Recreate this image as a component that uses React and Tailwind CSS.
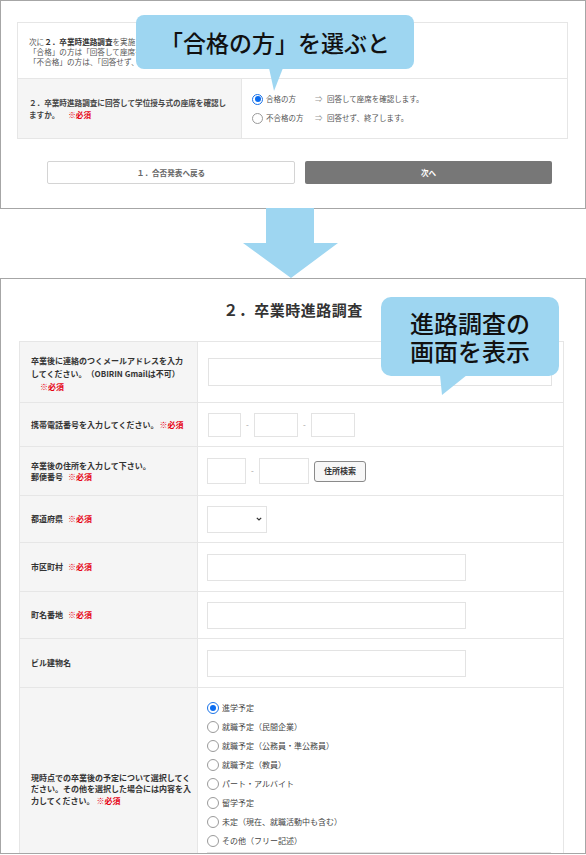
import React from "react";

const Radio = ({ checked, size = "w-[11px] h-[11px]" }) =>
  checked ? (
    <span className={`${size} rounded-full border border-[#1a73e8] bg-white flex items-center justify-center shrink-0`}>
      <span className="w-[6px] h-[6px] rounded-full bg-[#0a6cf0]" />
    </span>
  ) : (
    <span className={`${size} rounded-full border border-[#9a9a9a] bg-white shrink-0`} />
  );

const Req = ({ className = "" }) => (
  <span className={`text-[#e60012] font-bold ${className}`}>※必須</span>
);

const Input = ({ className }) => (
  <div className={`bg-white border border-[#e3e3e3] shrink-0 ${className}`} />
);

const Row = ({ h, label, children, labelClass = "" }) => (
  <div className={`flex border-b border-[#e6e6e6] ${h}`}>
    <div
      className={`w-[178px] shrink-0 bg-[#f5f5f5] border-r border-[#e6e6e6] flex items-center pl-[11px] text-[8px] font-bold text-[#333] whitespace-nowrap ${labelClass}`}
    >
      {label}
    </div>
    <div className="flex-1 flex items-center pl-[9px]">{children}</div>
  </div>
);

const Dash = () => (
  <span className="w-[13px] text-center text-[8px] text-[#999] shrink-0">-</span>
);

export default function App() {
  const plans = [
    "進学予定",
    "就職予定（民間企業）",
    "就職予定（公務員・準公務員）",
    "就職予定（教員）",
    "パート・アルバイト",
    "留学予定",
    "未定（現在、就職活動中も含む）",
    "その他（フリー記述）",
  ];
  return (
    <div className="relative w-[586px] h-[855px] overflow-hidden bg-white font-['Noto_Sans_CJK_JP',sans-serif] text-[#333]">
      {/* Top panel */}
      <div className="h-[209px] border border-[#a6a6a6] bg-white">
        <div className="ml-[16px] mt-[21px] w-[551px] border border-[#e6e6e6]">
          <div className="h-[56px] border-b border-[#e6e6e6] pl-[11px] pt-[14px] text-[7.6px] leading-[10px] text-[#555] whitespace-nowrap">
            <p>
              次に<b className="text-[#333]">２．卒業時進路調査</b>を実施します。
            </p>
            <p>「合格」の方は「回答して座席を確認します。」を、</p>
            <p>「不合格」の方は、「回答せず、終了します。」を選択してください。</p>
          </div>
          <div className="flex h-[59px]">
            <div className="w-[224px] shrink-0 bg-[#f5f5f5] border-r border-[#e6e6e6] flex items-center pl-[11px] text-[7.6px] leading-[12px] font-bold text-[#444] whitespace-nowrap">
              <p>
                ２．卒業時進路調査に回答して学位授与式の座席を確認し
                <br />
                ますか。<span className="inline-block w-[9px]" />
                <Req />
              </p>
            </div>
            <div className="flex flex-col justify-center pl-[10px] gap-[8px] text-[7.5px] text-[#555] whitespace-nowrap">
              <div className="flex items-center h-[11px]">
                <Radio checked />
                <span className="ml-[3px] w-[49px]">合格の方</span>
                <span className="w-[12px] text-[#999]">⇒</span>
                <span>回答して座席を確認します。</span>
              </div>
              <div className="flex items-center h-[11px]">
                <Radio />
                <span className="ml-[3px] w-[49px]">不合格の方</span>
                <span className="w-[12px] text-[#999]">⇒</span>
                <span>回答せず、終了します。</span>
              </div>
            </div>
          </div>
        </div>
        <div className="mt-[22px] ml-[46px] flex gap-[10px]">
          <div className="w-[248px] h-[23px] rounded-[2px] border border-[#d4d4d4] bg-white flex items-center justify-center text-[7.6px] font-bold text-[#666]">
            １．合否発表へ戻る
          </div>
          <div className="w-[247px] h-[23px] rounded-[2px] bg-[#777777] flex items-center justify-center text-[7.6px] font-bold text-white">
            次へ
          </div>
        </div>
      </div>

      {/* Arrow */}
      <div className="h-[70px]">
        <svg width="95" height="70" viewBox="0 0 95 70" className="ml-[243px] -mt-[1px]">
          <polygon points="23,0 71,0 71,35 95,35 48,70 0,35 23,35" fill="#9ed6f1" />
        </svg>
      </div>

      {/* Bottom panel */}
      <div className="h-[576px] border border-[#a6a6a6] overflow-hidden bg-white">
        <div className="h-[62px] flex items-center justify-center text-[15px] font-bold text-[#333] tracking-[0.5px]">
          ２．卒業時進路調査
        </div>
        <div className="ml-[18px] w-[545px] border-t border-l border-r border-[#e6e6e6]">
          <Row
            h="h-[61px]"
            label={
              <p className="leading-[13px] pt-[2px]">
                卒業後に連絡のつくメールアドレスを入力
                <br />
                してください。（OBIRIN Gmailは不可）
                <br />
                <Req className="ml-[9px]" />
              </p>
            }
          >
            <Input className="w-[344px] h-[28px] ml-[1px]" />
          </Row>
          <Row
            h="h-[44px]"
            label={
              <p>
                携帯電話番号を入力してください。<span className="inline-block w-[1px]" />
                <Req />
              </p>
            }
          >
            <div className="flex items-center ml-[1px]">
              <Input className="w-[33px] h-[24px]" />
              <Dash />
              <Input className="w-[44px] h-[24px]" />
              <Dash />
              <Input className="w-[44px] h-[24px]" />
            </div>
          </Row>
          <Row
            h="h-[49px]"
            label={
              <p className="leading-[11px]">
                卒業後の住所を入力して下さい。
                <br />
                郵便番号<span className="inline-block w-[5px]" />
                <Req />
              </p>
            }
          >
            <div className="flex items-center">
              <Input className="w-[39px] h-[26px]" />
              <Dash />
              <Input className="w-[50px] h-[26px]" />
              <div className="ml-[5px] w-[52px] h-[21px] rounded-[3px] border border-[#8a8a8a] bg-[#f7f7f7] flex items-center justify-center text-[8px] font-bold text-[#333]">
                住所検索
              </div>
            </div>
          </Row>
          <Row
            h="h-[47px]"
            label={
              <p>
                都道府県<span className="inline-block w-[5px]" />
                <Req />
              </p>
            }
          >
            <div className="w-[60px] h-[27px] bg-white border border-[#e3e3e3] flex items-center justify-end pr-[4px]">
              <svg width="6" height="4" viewBox="0 0 6 4">
                <path d="M0.8 0.8 L3 3 L5.2 0.8" stroke="#333" strokeWidth="1.2" fill="none" />
              </svg>
            </div>
          </Row>
          <Row
            h="h-[49px]"
            label={
              <p>
                市区町村<span className="inline-block w-[5px]" />
                <Req />
              </p>
            }
          >
            <Input className="w-[259px] h-[27px]" />
          </Row>
          <Row
            h="h-[47px]"
            label={
              <p>
                町名番地<span className="inline-block w-[5px]" />
                <Req />
              </p>
            }
          >
            <Input className="w-[259px] h-[27px]" />
          </Row>
          <Row h="h-[49px]" label={<p>ビル建物名</p>}>
            <Input className="w-[259px] h-[27px]" />
          </Row>
          <div className="flex h-[203px] border-b border-[#e6e6e6]">
            <div className="w-[178px] shrink-0 bg-[#f5f5f5] border-r border-[#e6e6e6] flex items-center pl-[11px] text-[8px] leading-[11.5px] font-bold text-[#333] whitespace-nowrap">
              <p>
                現時点での卒業後の予定について選択してく
                <br />
                ださい。その他を選択した場合には内容を入
                <br />
                力してください。<span className="inline-block w-[2px]" />
                <Req />
              </p>
            </div>
            <div className="flex-1 pl-[9px] pt-[10px]">
              {plans.map((p, i) => (
                <div key={p} className="h-[19px] flex items-center text-[8px] text-[#444] whitespace-nowrap">
                  <Radio checked={i === 0} size="w-[12px] h-[12px]" />
                  <span className="ml-[3px]">{p}</span>
                </div>
              ))}
              <Input className="mt-[2px] w-[344px] h-[27px]" />
            </div>
          </div>
        </div>
      </div>

      {/* Callout 1 */}
      <div className="absolute left-[136px] top-[15px] w-[278px] h-[54px] rounded-[8px] bg-[#9ed6f1] flex items-center justify-center text-[23px] font-medium text-[#111] whitespace-nowrap">
        「合格の方」を選ぶと
      </div>
      <svg className="absolute left-[268px] top-[68px]" width="16" height="24" viewBox="0 0 16 24">
        <polygon points="1,0 15,0 6,23" fill="#9ed6f1" />
      </svg>

      {/* Callout 2 */}
      <div className="absolute left-[381px] top-[297px] w-[178px] h-[79px] rounded-[10px] bg-[#9ed6f1] flex flex-col items-center justify-center text-[24px] leading-[28px] font-medium text-[#111]">
        <p>進路調査の</p>
        <p>画面を表示</p>
      </div>
      <svg className="absolute left-[440px] top-[375px]" width="28" height="21" viewBox="0 0 28 21">
        <polygon points="0,0 27,0 2,20" fill="#9ed6f1" />
      </svg>
    </div>
  );
}
